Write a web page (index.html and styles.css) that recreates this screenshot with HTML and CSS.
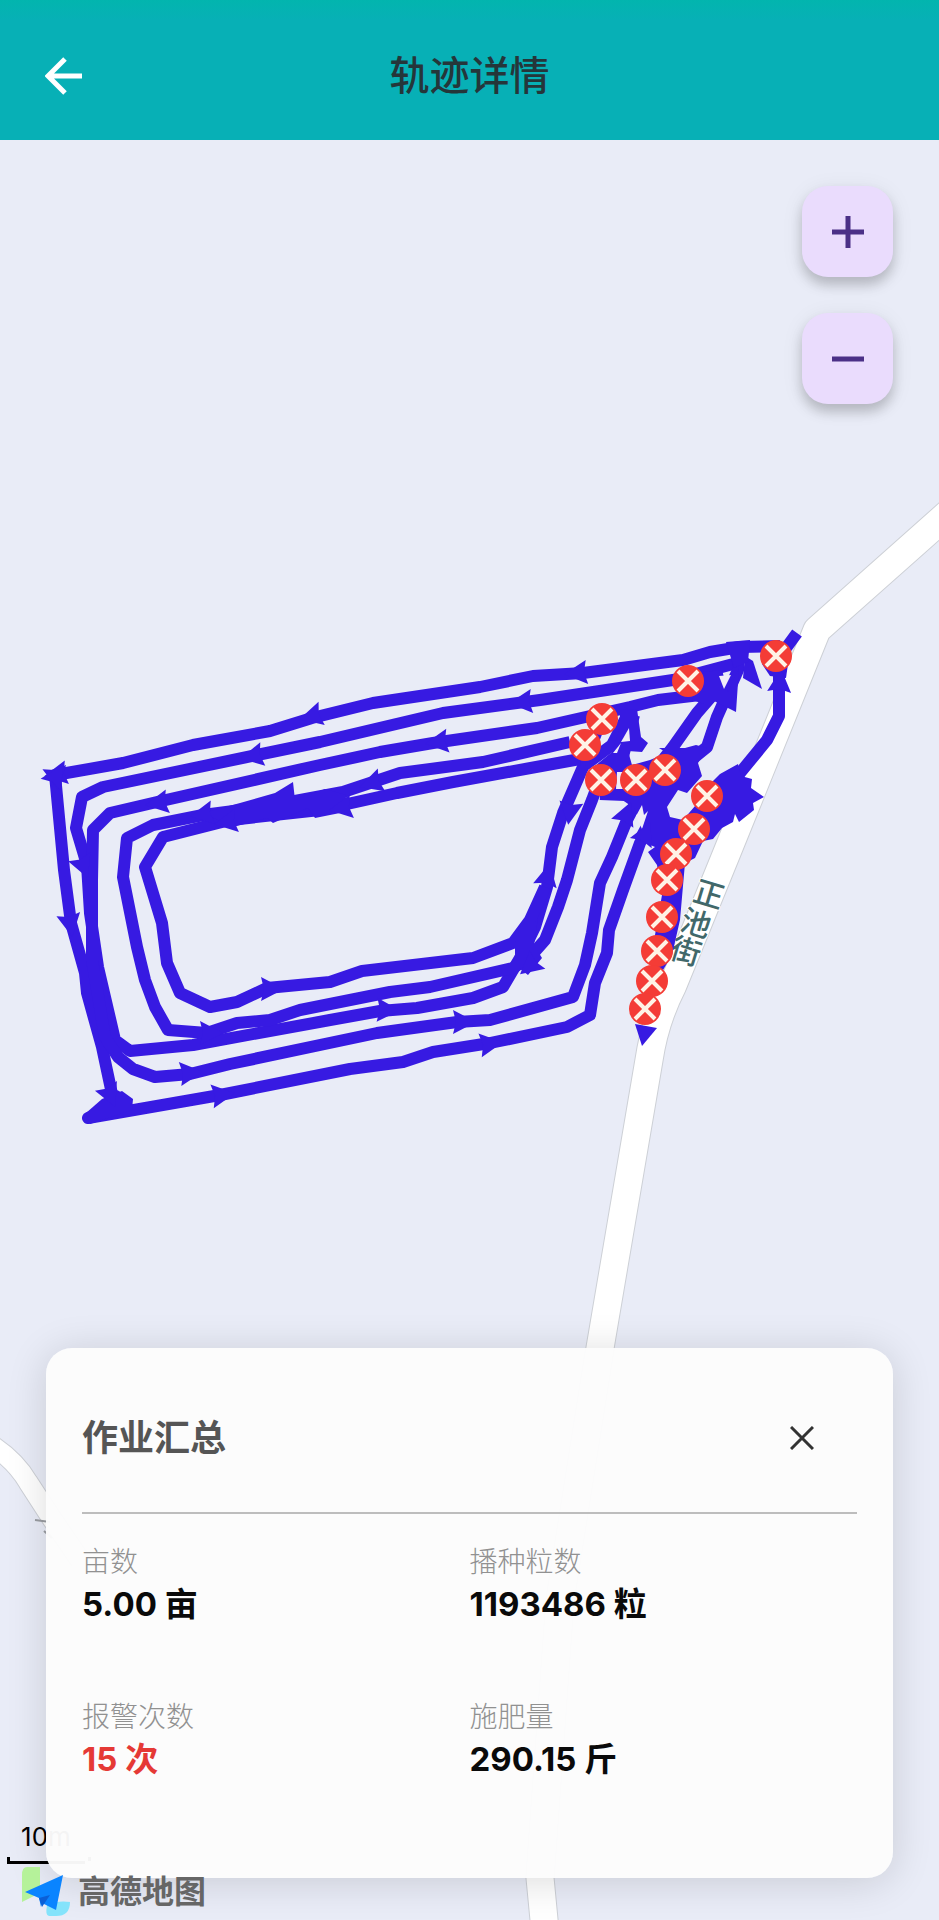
FILE: index.html
```html
<!DOCTYPE html>
<html lang="zh-CN">
<head>
  <meta charset="UTF-8">
  <meta name="viewport" content="width=device-width, initial-scale=1">
  <title>轨迹详情</title>
  <link rel="stylesheet" href="styles.css">
</head>
<body>
  <header class="topbar">
    <button class="back" aria-label="返回">
      <svg width="38" height="38" viewBox="0 0 38 38"><path d="M37 19H4M20 2L3 19l17 17"/></svg>
    </button>
    <h1>轨迹详情</h1>
  </header>

  <main class="map">
    <svg class="map-canvas" viewBox="0 140 939 1780" preserveAspectRatio="xMidYMin slice">
      <defs>
        <path id="arrow" d="M13 0L-10-12L-7 0L-10 12Z"/>
        <g id="alarm">
          <circle r="16" class="alarm-dot"/>
          <path d="M-10-10L10 10M10-10L-10 10" class="alarm-cross"/>
        </g>
        <path id="road" d="M960 503L817 630L800 672L728 850L673 985Q655 1020 649 1060L600 1348L560 1600L540 1878L545 1930"/>
        <path id="lane" d="M-10 1444Q15 1460 28 1482L50 1516L80 1560"/>
      </defs>

      <!-- roads -->
      <use href="#road" class="road-edge"/>
      <use href="#road" class="road"/>
      <use href="#lane" class="lane-edge"/>
      <use href="#lane" class="lane"/>
      <path d="M35 1520L50 1522M44 1531L52 1538" class="lane-mark"/>

      <!-- street name -->
      <g class="street">
        <text transform="translate(709 894) rotate(17)">正</text>
        <text transform="translate(696 923) rotate(17)">池</text>
        <text transform="translate(686 951) rotate(17)">街</text>
      </g>

      <!-- track -->
      <g class="track">
        <path d="M797 633L775 663M780 646L740 647L710 652L683 660L583 673L533 676L480 687L373 703L312 718L270 731L193 745L123 763L55 775L64 870L71 923L85 973L87 993L102 1047L112 1094L126 1102L88 1118L220 1095L350 1069L403 1062L433 1052L490 1043L567 1027L590 1015L595 983L607 953L609 930L623 890L640 843L655 815"/>
        <path d="M737 663L673 680L540 700L443 713L320 742L257 755L103 787L82 797L76 828L87 865L90 913L98 967L115 1040L130 1051L193 1045L330 1020L380 1011L417 1008L473 998L503 987L520 958L535 927L547 887L552 847L563 813L583 767L605 710"/>
        <path d="M700 695L658 700L630 707L537 728L433 743L380 752L320 765L157 802L110 813L93 830L92 880L92 960L105 1037L118 1057L133 1069L155 1077L190 1074L230 1064L377 1033L457 1022L490 1020L573 997L585 965L592 933L600 883L612 857L627 820L640 795"/>
        <path d="M570 742L483 762L400 773L343 792L263 807L203 815L153 825L127 838L123 877L137 947L145 980L155 1007L168 1030L207 1033L237 1023L270 1020L300 1010L390 992L430 987L513 968L530 957L545 940L558 907L567 880L580 830L592 800L605 765"/>
        <path d="M580 759L453 782L397 793L320 810L230 820L163 837L145 867L162 923L167 963L180 993L210 1007L237 1002L267 988L330 982L362 971L473 958L513 943L530 920L545 887"/>
        <path d="M779 655L779 716L767 740L740 773L725 795"/>
        <path d="M740 645L738 670L717 717L707 747L685 765L660 790"/>
        <path d="M705 675L717 690L697 713L673 747L655 770"/>
        <path d="M630 710L612 745L585 765M634 715L618 775M600 794L650 796"/>
      </g>
      <g class="track-fill">
        <path d="M203 813L240 803L275 793L293 782L295 800L325 789L346 795L345 812L315 818L308 808L273 823L267 818L233 827Z"/>
        <path d="M86 1113L102 1099L122 1091L133 1099L132 1110L90 1124Z"/>
        <path d="M515 942L538 918L534 945L542 958L528 975L515 965Z"/>
        <path d="M703 672L722 670L728 692L739 668L736 712L712 700L704 704L692 700Z"/>
        <path d="M637 709L641 737L648 743L642 752L628 751L632 765L650 760L667 753L659 748L685 748L696 745L707 748L698 763L702 776L687 793L678 790L667 807L670 817L683 820L695 806L712 782L720 774L738 764L741 776L752 779L751 788L764 797L753 803L754 810L739 822L735 814L733 822L722 828L713 839L703 841L695 858L685 863L680 920L672 955L663 970L654 965L655 935L662 895L657 865L648 852L655 847L634 838L641 825L634 808L615 795L596 790L590 770L612 752L620 727L620 710Z"/>
        <path d="M635 1024L657 1028L642 1046Z"/>
        <path d="M745 656L753 661L762 689L743 678Z"/>
        <path d="M762 664L770 676L786 678L788 664Z"/>
        <path d="M726 642L750 640L748 662L734 668Z"/>
      </g>
      <!-- gaps left between the crossing tracks -->
      <g class="track-gap">
        <path d="M719 676L731 675L724 689Z"/>
        <path d="M621 742L629 728L630 741Z"/>
        <path d="M613 753L621 743L617 753Z"/>
        <path d="M636 816L642 805L644 815L648 811L642 829Z"/>
        <path d="M617 772L625 772L625 789L616 789Z"/>
      </g>

      <!-- travel direction -->
      <g class="track-fill">
        <use href="#arrow" transform="translate(312 716) rotate(165)"/>
        <use href="#arrow" transform="translate(577 673) rotate(174)"/>
        <use href="#arrow" transform="translate(57 774) rotate(170)"/>
        <use href="#arrow" transform="translate(56 777) rotate(80)"/>
        <use href="#arrow" transform="translate(56 776) rotate(-60)"/>
        <use href="#arrow" transform="translate(70 924) rotate(80)"/>
        <use href="#arrow" transform="translate(110 1095) rotate(66)"/>
        <use href="#arrow" transform="translate(222 1095) rotate(-8)"/>
        <use href="#arrow" transform="translate(490 1044) rotate(-8)"/>
        <use href="#arrow" transform="translate(253 756) rotate(168)"/>
        <use href="#arrow" transform="translate(522 702) rotate(174)"/>
        <use href="#arrow" transform="translate(387 1010) rotate(2)"/>
        <use href="#arrow" transform="translate(158 803) rotate(170)"/>
        <use href="#arrow" transform="translate(438 742) rotate(172)"/>
        <use href="#arrow" transform="translate(190 1073) rotate(-6)"/>
        <use href="#arrow" transform="translate(463 1022) rotate(0)"/>
        <use href="#arrow" transform="translate(83 866) rotate(68)"/>
        <use href="#arrow" transform="translate(372 783) rotate(162)"/>
        <use href="#arrow" transform="translate(203 814) rotate(170)"/>
        <use href="#arrow" transform="translate(210 1033) rotate(0)"/>
        <use href="#arrow" transform="translate(342 808) rotate(170)"/>
        <use href="#arrow" transform="translate(227 822) rotate(170)"/>
        <use href="#arrow" transform="translate(271 989) rotate(0)"/>
        <use href="#arrow" transform="translate(547 876) rotate(-78)"/>
        <use href="#arrow" transform="translate(570 812) rotate(98)"/>
        <use href="#arrow" transform="translate(530 966) rotate(140)"/>
        <use href="#arrow" transform="translate(626 814) rotate(-68)"/>
        <use href="#arrow" transform="translate(780 682) rotate(-85)"/>
        <use href="#arrow" transform="translate(645 834) rotate(-65)"/>
      </g>

      <!-- alarms -->
      <use href="#alarm" x="776" y="656"/>
      <use href="#alarm" x="688" y="681"/>
      <use href="#alarm" x="602" y="719"/>
      <use href="#alarm" x="585" y="745"/>
      <use href="#alarm" x="601" y="780"/>
      <use href="#alarm" x="636" y="780"/>
      <use href="#alarm" x="665" y="770"/>
      <use href="#alarm" x="707" y="796"/>
      <use href="#alarm" x="694" y="829"/>
      <use href="#alarm" x="676" y="854"/>
      <use href="#alarm" x="667" y="880"/>
      <use href="#alarm" x="662" y="917"/>
      <use href="#alarm" x="657" y="951"/>
      <use href="#alarm" x="652" y="981"/>
      <use href="#alarm" x="645" y="1009"/>
    </svg>

    <div class="zoom">
      <button class="zoom-btn" aria-label="放大">
        <svg width="32" height="32" viewBox="0 0 32 32"><path d="M0 16h32M16 0v32"/></svg>
      </button>
      <button class="zoom-btn" aria-label="缩小">
        <svg width="32" height="32" viewBox="0 0 32 32"><path d="M0 16h32"/></svg>
      </button>
    </div>

    <div class="scale">10m</div>

    <section class="card">
      <div class="card-head">
        <h2>作业汇总</h2>
        <button class="close" aria-label="关闭">
          <svg width="24" height="24" viewBox="0 0 24 24"><path d="M1 1l22 22M23 1L1 23"/></svg>
        </button>
      </div>
      <dl class="stats">
        <div class="stat">
          <dt>亩数</dt>
          <dd>5.00 亩</dd>
        </div>
        <div class="stat">
          <dt>播种粒数</dt>
          <dd>1193486 粒</dd>
        </div>
        <div class="stat">
          <dt>报警次数</dt>
          <dd class="warn">15 次</dd>
        </div>
        <div class="stat">
          <dt>施肥量</dt>
          <dd>290.15 斤</dd>
        </div>
      </dl>
    </section>

    <div class="brand">
      <svg width="52" height="52" viewBox="0 0 52 52">
        <path d="M7 1h13v26L2 36V9q0-8 5-8z" fill="#b5f29a"/>
        <path d="M27 39q11-5 23-3q0 14-14 14H29q-4 0-2-11z" fill="#84e3fb"/>
        <path d="M5 26L43 9L36 44L22 37L21 41L19 32Z" fill="#0a84ff"/>
        <path d="M19 32L22 41L26 35L30 29Z" fill="#0b5fd6"/>
      </svg>
      <span>高德地图</span>
    </div>
  </main>
</body>
</html>
```
FILE: styles.css
```css
* {
  box-sizing: border-box;
}
body {
  margin: 0;
  min-height: 100vh;
  display: flex;
  flex-direction: column;
  font-family: Inter, "Noto Sans CJK SC", sans-serif;
  background: #e9ecf7;
}
h1, h2, dl, dd {
  margin: 0;
}
button {
  display: flex;
  align-items: center;
  justify-content: center;
  padding: 0;
  border: none;
  background: none;
  cursor: pointer;
}
button svg {
  fill: none;
  stroke: currentColor;
}

/* top bar */
.topbar {
  display: grid;
  grid-template-columns: 1fr auto 1fr;
  align-items: center;
  height: 140px;
  padding: 12px 45px 0;
  background: linear-gradient(#02b5ae, #07b0b6 20px);
}
.topbar h1 {
  font-size: 40px;
  font-weight: 500;
  line-height: 48px;
  color: #25363a;
}
.back {
  justify-self: start;
  color: #fff;
  stroke-width: 5px;
}

/* map */
.map {
  position: relative;
  flex: 1;
  overflow: hidden;
}
.map-canvas {
  position: absolute;
  inset: 0;
  width: 100%;
  height: 100%;
}
.road, .road-edge, .lane, .lane-edge {
  fill: none;
  stroke-linejoin: round;
}
.road {
  stroke: #fff;
  stroke-width: 27px;
}
.road-edge {
  stroke: #cdd0d6;
  stroke-width: 29px;
}
.lane {
  stroke: #fff;
  stroke-width: 19px;
}
.lane-edge {
  stroke: #cdd0d6;
  stroke-width: 21px;
}
.lane-mark {
  stroke: #9a9da2;
  stroke-width: 2px;
}
.street {
  font-size: 30px;
  font-weight: 500;
  fill: #41686a;
  stroke: #fff;
  stroke-width: 2px;
  paint-order: stroke;
  text-anchor: middle;
  dominant-baseline: central;
}
.track {
  fill: none;
  stroke: #371ae2;
  stroke-width: 12px;
  stroke-linejoin: round;
}
.track-fill {
  fill: #371ae2;
}
.track-gap {
  fill: #f1edf8;
}
.alarm-dot {
  fill: #f43c36;
}
.alarm-cross {
  stroke: #fff3e6;
  stroke-width: 4px;
}

/* zoom buttons */
.zoom {
  position: absolute;
  top: 46px;
  right: 46px;
  display: flex;
  flex-direction: column;
  gap: 36px;
}
.zoom-btn {
  width: 91px;
  height: 91px;
  border-radius: 26px;
  background: #eadcfd;
  color: #4b3087;
  stroke-width: 5px;
  box-shadow: 0 8px 12px rgba(0, 0, 0, 0.18), 0 4px 22px rgba(0, 0, 0, 0.08);
}

/* scale bar */
.scale {
  position: absolute;
  left: 7px;
  bottom: 56px;
  width: 78px;
  height: 54px;
  border-bottom: 3px solid #000;
  font-size: 26px;
  line-height: 54px;
  text-align: center;
}
.scale::before {
  content: "";
  position: absolute;
  left: 0;
  bottom: 0;
  width: 100%;
  height: 4px;
  border: solid #000;
  border-width: 0 3px;
}

/* summary card */
.card {
  position: absolute;
  left: 46px;
  right: 46px;
  bottom: 42px;
  padding: 20px 36px 97px;
  border-radius: 26px;
  background: rgba(252, 252, 252, 0.97);
  box-shadow: 0 4px 40px rgba(0, 0, 0, 0.14);
}
.card-head {
  display: flex;
  align-items: center;
  justify-content: space-between;
  height: 146px;
  padding-bottom: 4px;
  border-bottom: 2px solid #bdbdbd;
}
.card-head h2 {
  font-size: 36px;
  font-weight: 700;
  line-height: 48px;
  color: #555;
}
.close {
  width: 110px;
  height: 80px;
  color: #333;
  stroke-width: 3px;
}
.stats {
  display: grid;
  grid-template-columns: 1fr 1fr;
  row-gap: 71px;
  padding-top: 28px;
}
.stat dt {
  font-size: 28px;
  font-weight: 300;
  line-height: 40px;
  color: #919191;
}
.stat dd {
  font-size: 33px;
  font-weight: 700;
  line-height: 44px;
  color: #0a0a0a;
}
.stat .warn {
  color: #e53935;
}

/* map provider */
.brand {
  position: absolute;
  left: 20px;
  bottom: 2px;
  display: flex;
  align-items: center;
  gap: 6px;
  font-size: 32px;
  font-weight: 700;
  line-height: 52px;
  color: #666;
}
```
